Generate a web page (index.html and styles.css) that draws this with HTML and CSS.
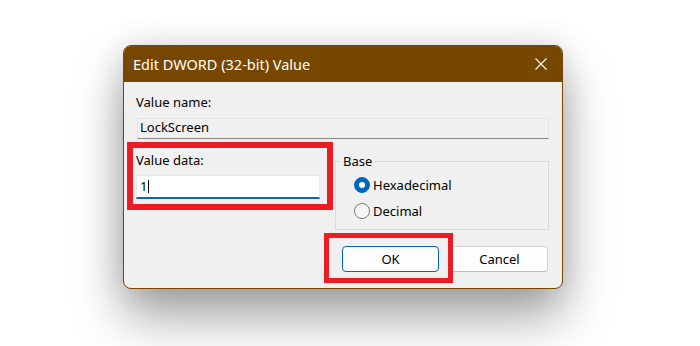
FILE: index.html
```html
<!DOCTYPE html>
<html lang="en">

<head>
    <meta charset="UTF-8">
    <meta name="viewport" content="width=device-width, initial-scale=1.0">
    <title>Edit DWORD (32-bit) Value</title>
    <link rel="stylesheet" href="styles.css">
</head>

<body>
    <!-- Dialogo -->
    <div class="dialog">
        <div class="titlebar">
            <span class="title">Edit DWORD (32-bit) Value</span>
            <svg class="close" width="12" height="12" viewBox="0 0 12 12">
                <path d="M0.5 0.5 L11.5 11.5 M11.5 0.5 L0.5 11.5" stroke="#fff" stroke-width="1.1" fill="none"/>
            </svg>
        </div>

        <div class="content">
            <div class="field-label">Value name:</div>
            <div class="name-field">LockScreen</div>

            <div class="data-row">
                <div class="value-data highlight">
                    <div class="field-label">Value data:</div>
                    <div class="data-input"><span>1</span><span class="caret"></span></div>
                </div>

                <fieldset class="base">
                    <legend>Base</legend>
                    <div class="radio"><span class="dot checked"></span>Hexadecimal</div>
                    <div class="radio"><span class="dot"></span>Decimal</div>
                </fieldset>
            </div>

            <div class="buttons">
                <div class="ok-wrap highlight-ok">
                    <button class="btn btn-primary">OK</button>
                </div>
                <button class="btn">Cancel</button>
            </div>
        </div>
    </div>
</body>

</html>
```

FILE: styles.css
```css
/* General */
html {
    background-color: #fff;
}

body {
    margin: 0;
    padding: 45px 0 0 123px;
    min-height: 100vh;
    box-sizing: border-box;
    background-color: #fff;
    font-family: "Noto Sans", sans-serif;
    font-size: 13px;
    line-height: 17px;
    color: #000;
}

.dialog {
    width: 440px;
    box-sizing: border-box;
    border: 1px solid #774700;
    border-radius: 8px;
    background-color: #f0f0f0;
    overflow: hidden;
    box-shadow: 0 28px 50px rgba(0, 0, 0, 0.36), 0 0 30px rgba(0, 0, 0, 0.12);
}

/* Barra de titulo */
.titlebar {
    height: 36px;
    background-color: #774700;
    color: #fff;
    display: flex;
    justify-content: space-between;
    align-items: center;
    padding: 0 15px 0 9px;
}

.title {
    font-size: 14.5px;
}

.content {
    padding: 0 13px 16px 12px;
}

.field-label {
    margin-top: 12px;
}

.name-field {
    margin: 7px 0 0 1px;
    height: 19px;
    padding: 0 0 0 2px;
    border: 1px solid #e4e4e4;
    border-bottom-color: #868686;
    line-height: 17px;
}

.data-row {
    display: grid;
    grid-template-columns: 199px 1fr;
}

/* Valor */
.value-data {
    margin-top: 3px;
    padding-top: 10px;
}

.value-data .field-label {
    margin-top: 0;
}

.highlight,
.ok-wrap {
    position: relative;
}

.highlight::after {
    content: "";
    position: absolute;
    top: 0;
    left: -9px;
    width: 206px;
    height: 68px;
    box-sizing: border-box;
    border: 6px solid #ed1c24;
}

.data-input {
    margin-top: 6px;
    width: 184px;
    height: 24px;
    box-sizing: border-box;
    padding-left: 3px;
    background-color: #fff;
    border: 1px solid #e8e8e8;
    border-bottom: 2px solid #0067c0;
    line-height: 21px;
    display: flex;
    align-items: center;
}

.caret {
    width: 1px;
    height: 13px;
    margin-left: 1px;
    background-color: #000;
}

/* Base */
.base {
    margin: 14px 0 0 0;
    padding: 0 0 8px 5px;
    border: 1px solid #d9d9d9;
    min-width: 0;
}

.base legend {
    padding: 0 2px;
}

.radio {
    height: 20px;
    line-height: 20px;
    margin-left: 13px;
    display: flex;
    align-items: center;
    gap: 3px;
}

.radio:first-of-type {
    margin-top: 5px;
}

.radio + .radio {
    margin-top: 6px;
}

.dot {
    width: 16px;
    height: 16px;
    box-sizing: border-box;
    border-radius: 50%;
    border: 1px solid #7a7a7a;
    background-color: #f6f6f6;
    display: flex;
    align-items: center;
    justify-content: center;
}

.dot.checked {
    border-color: #0067c0;
    background-color: #0067c0;
}

.dot.checked::after {
    content: "";
    width: 6px;
    height: 6px;
    border-radius: 50%;
    background-color: #fff;
}

/* Botones */
.buttons {
    margin-top: 16px;
    padding-right: 1px;
    display: flex;
    justify-content: flex-end;
    gap: 12px;
}

.btn {
    width: 97px;
    height: 26px;
    padding: 0;
    font-family: inherit;
    font-size: 13px;
    color: #000;
    background-color: #fdfdfd;
    border: 1px solid #d3d3d3;
    border-bottom-color: #bdbdbd;
    border-radius: 4px;
    display: block;
}

.btn-primary {
    border-color: #0067c0;
}

.highlight-ok::after {
    content: "";
    position: absolute;
    top: -13px;
    left: -18px;
    right: -14px;
    bottom: -11px;
    border: 5px solid #ed1c24;
    z-index: 1;
}
```
